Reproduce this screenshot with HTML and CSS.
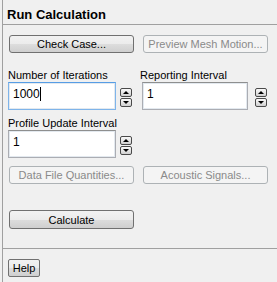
FILE: index.html
```html
<!DOCTYPE html>
<html lang="en">
<head>
  <meta charset="UTF-8" />
  <title>Run Calculation</title>
  <link rel="stylesheet" href="styles.css">
</head>
<body>
  <div class="panel">
    <div class="title">Run Calculation</div>

    <div class="content">
      <div class="btn-row">
        <button class="btn">Check Case...</button>
        <button class="btn" disabled>Preview Mesh Motion...</button>
      </div>

      <div class="fields">
        <div class="field">
          <label>Number of Iterations</label>
          <div class="spin-row">
            <div class="input focused">1000<span class="caret"></span></div>
            <div class="spinner">
              <span class="spin up"></span>
              <span class="spin down"></span>
            </div>
          </div>
        </div>
        <div class="field second">
          <label>Reporting Interval</label>
          <div class="spin-row">
            <div class="input">1</div>
            <div class="spinner">
              <span class="spin up"></span>
              <span class="spin down"></span>
            </div>
          </div>
        </div>
        <div class="field">
          <label>Profile Update Interval</label>
          <div class="spin-row">
            <div class="input">1</div>
            <div class="spinner">
              <span class="spin up"></span>
              <span class="spin down"></span>
            </div>
          </div>
        </div>
      </div>

      <div class="btn-row data-row">
        <button class="btn" disabled>Data File Quantities...</button>
        <button class="btn" disabled>Acoustic Signals...</button>
      </div>

      <div class="btn-row calc-row">
        <button class="btn calc">Calculate</button>
      </div>
    </div>

    <div class="footer">
      <button class="btn help">Help</button>
    </div>
  </div>
</body>
</html>
```

FILE: styles.css
```css
* {
  box-sizing: border-box;
  margin: 0;
  padding: 0;
}

body {
  background: #f0f0f0;
  font-family: "Liberation Sans", Arial, sans-serif;
  font-size: 11px;
  color: #000;
  width: 277px;
  height: 282px;
  overflow: hidden;
}

.panel {
  margin-left: 2px;
  border-left: 1px solid #a0a0a0;
  height: 282px;
}

/* Header */
.title {
  height: 25px;
  padding: 7px 0 0 4px;
  border-bottom: 1px solid #a0a0a0;
  font-size: 13px;
  font-weight: bold;
  line-height: 15px;
}

.content {
  padding: 10px 0 0 5px;
  height: 223px;
}

/* Buttons */
.btn-row {
  display: flex;
  gap: 9px;
  padding-left: 1px;
}

.btn {
  width: 125px;
  height: 18px;
  font-family: inherit;
  font-size: 11px;
  color: #000;
  border: 1px solid #707070;
  border-radius: 3px;
  background: linear-gradient(#f2f2f2 0%, #ebebeb 50%, #dddddd 51%, #cfcfcf 100%);
  line-height: 14px;
}

.btn:disabled {
  color: #8a8a8a;
  border-color: #adb2b5;
  background: #f4f4f4;
}

/* Spin fields */
.fields {
  display: grid;
  grid-template-columns: 124px 127px;
  column-gap: 8px;
  row-gap: 7px;
  margin-top: 16px;
}

.field label {
  display: block;
  line-height: 13px;
  height: 13px;
}

.spin-row {
  display: flex;
  align-items: center;
  gap: 4px;
}

.input {
  width: 108px;
  height: 28px;
  background: #fff;
  border: 1px solid #abadb3;
  border-top-color: #8e8f8f;
  box-shadow: inset 0 0 0 1px #e3e9ef;
  padding: 4px 0 0 4px;
  font-size: 12px;
  line-height: 14px;
}

.input.focused {
  border-color: #7eb4ea;
  border-top-color: #569de5;
}

.second .input {
  width: 106px;
  margin-left: 2px;
}

.second .spin-row {
  gap: 7px;
}

.caret {
  display: inline-block;
  width: 1px;
  height: 14px;
  background: #000;
  vertical-align: top;
}

.spinner {
  display: flex;
  flex-direction: column;
  gap: 1px;
  margin-top: 3px;
}

.spin {
  position: relative;
  width: 12px;
  height: 9px;
  border: 1px solid #4a4a4a;
  border-radius: 2px;
  background: linear-gradient(#fafafa, #d0d0d0);
}

.spin::after {
  content: "";
  position: absolute;
  left: 2px;
  border-left: 3px solid transparent;
  border-right: 3px solid transparent;
}

.spin.up::after {
  top: 2px;
  border-bottom: 3px solid #000;
}

.spin.down::after {
  top: 2px;
  border-top: 3px solid #000;
}

.data-row {
  margin-top: 8px;
}

.calc-row {
  margin-top: 26px;
}

.btn.calc {
  height: 19px;
}

/* Footer */
.footer {
  border-top: 1px solid #a0a0a0;
  padding: 10px 0 0 5px;
}

.btn.help {
  width: 32px;
  height: 18px;
  border-radius: 2px;
}
```
